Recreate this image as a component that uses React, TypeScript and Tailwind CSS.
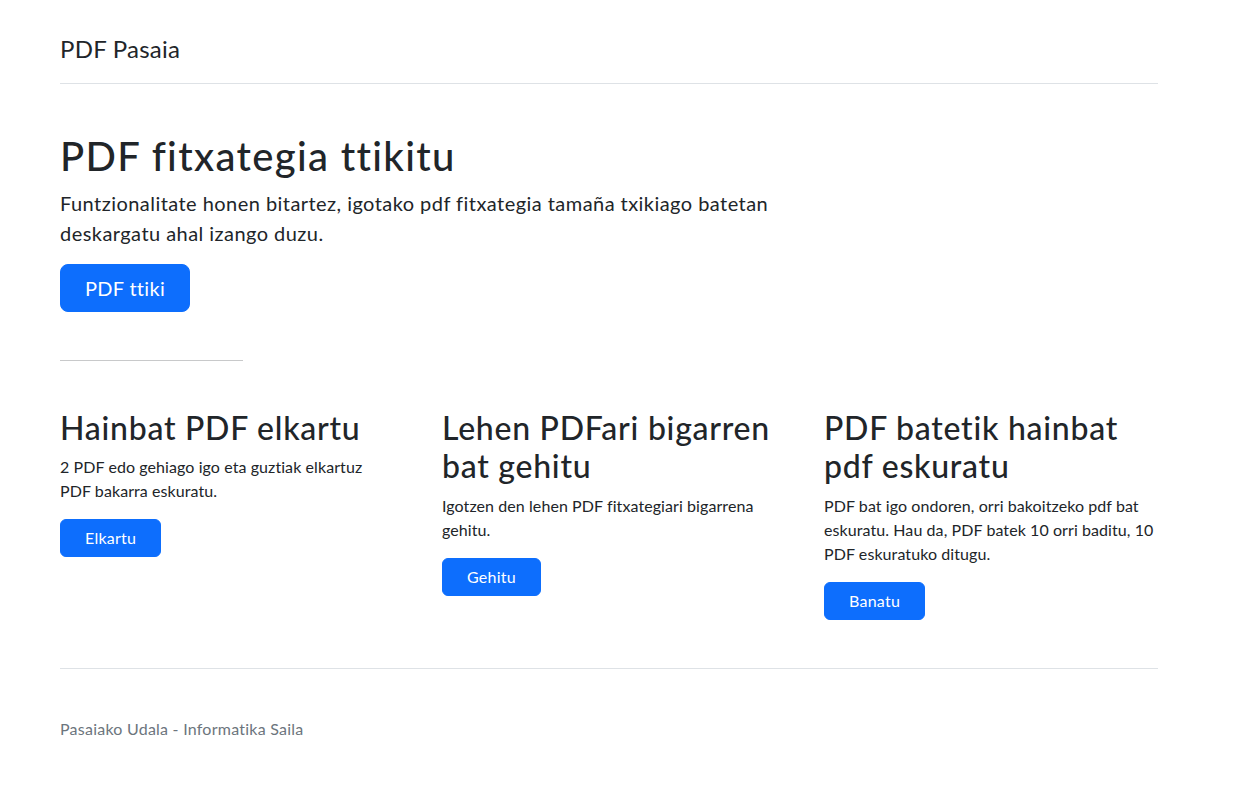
const features = [
  {
    title: 'Hainbat PDF elkartu',
    text: '2 PDF edo gehiago igo eta guztiak elkartuz PDF bakarra eskuratu.',
    button: 'Elkartu',
  },
  {
    title: 'Lehen PDFari bigarren bat gehitu',
    text: 'Igotzen den lehen PDF fitxategiari bigarrena gehitu.',
    button: 'Gehitu',
  },
  {
    title: 'PDF batetik hainbat pdf eskuratu',
    text: 'PDF bat igo ondoren, orri bakoitzeko pdf bat eskuratu. Hau da, PDF batek 10 orri baditu, 10 PDF eskuratuko ditugu.',
    button: 'Banatu',
  },
];

export default function App() {
  return (
    <div className="min-h-screen bg-white pl-[60px] font-['Lato','Liberation_Sans',sans-serif] tracking-[0.005em] text-[#212529] [font-variant-ligatures:none]">
      <div className="w-[1098px] pt-[31px]">
        <header className="flex items-center border-b border-[#dee2e6] pb-4">
          <span className="text-2xl leading-9 tracking-[0.01em]">PDF Pasaia</span>
        </header>

        <main className="pt-12">
          <h1 className="mb-2 text-[40px] font-medium leading-[1.2] tracking-[0.033em]">PDF fitxategia ttikitu</h1>
          <p className="mb-4 w-[732px] text-xl leading-[30px] tracking-[0.0225em]">
            Funtzionalitate honen bitartez, igotako pdf fitxategia tamaña txikiago batetan deskargatu ahal
            izango duzu.
          </p>
          <div className="mb-12">
            <button className="rounded-lg border border-[#0d6efd] bg-[#0d6efd] px-6 py-2 text-xl leading-[30px] tracking-[0.015em] text-white">
              PDF ttiki
            </button>
          </div>

          <hr className="mb-12 w-[183px] border-t border-[#c8c9ca]" />

          <div className="grid grid-cols-3 gap-x-12">
            {features.map((f) => (
              <div key={f.title}>
                <h2 className="mb-2 text-[32px] font-medium leading-[1.2] tracking-[0.023em]">{f.title}</h2>
                <p className="mb-4 text-base leading-6">{f.text}</p>
                <button className="rounded-md border border-[#0d6efd] bg-[#0d6efd] px-6 py-1.5 text-base leading-6 tracking-[0.015em] text-white">
                  {f.button}
                </button>
              </div>
            ))}
          </div>
        </main>

        <footer className="mt-12 border-t border-[#dee2e6] pt-12 pb-12 text-base leading-6 tracking-[0.015em] text-[#6c757d]">
          Pasaiako Udala - Informatika Saila
        </footer>
      </div>
    </div>
  );
}
